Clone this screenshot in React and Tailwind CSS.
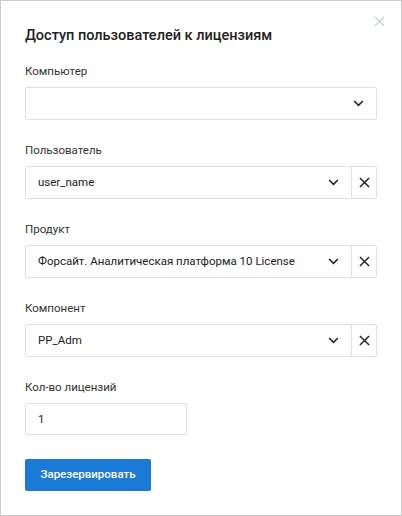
const font = { fontFamily: "Roboto, 'Noto Sans', sans-serif" };

function Chevron() {
  return (
    <svg viewBox="0 0 12 8" className="h-[7px] w-[11px] text-[#222]" fill="none" stroke="currentColor" strokeWidth="1.8">
      <path d="M1 1.2l5 5 5-5" />
    </svg>
  );
}

function Cross({ className }) {
  return (
    <svg viewBox="0 0 12 12" className={className} fill="none" stroke="currentColor" strokeWidth="1.6">
      <path d="M1 1l10 10M11 1L1 11" />
    </svg>
  );
}

function Field({ label, children }) {
  return (
    <div className="flex flex-col">
      <label className="mb-2 text-[11.5px] leading-4 text-[#333]">{label}</label>
      {children}
    </div>
  );
}

function Select({ value, clearable }) {
  return (
    <div className="flex h-[33px] w-[352px] items-stretch rounded-[2px] border border-[#dde1e6] bg-white">
      <div className="flex flex-1 items-center justify-between pl-3 pr-3">
        <span className="text-[11.5px] text-[#222]">{value}</span>
        <Chevron />
      </div>
      {clearable && (
        <button className="flex w-[25px] items-center justify-center border-l border-[#dde1e6] text-[#222]">
          <Cross className="h-[11px] w-[11px]" />
        </button>
      )}
    </div>
  );
}

export default function App() {
  return (
    <div style={font} className="relative h-[516px] w-[402px] border border-[#cbcbcb] bg-white pl-6 pt-[25px]">
      <button className="absolute right-[16px] top-[15px] text-[#c9d5df]">
        <Cross className="h-[11px] w-[11px]" />
      </button>
      <h2 className="text-[14.5px] font-medium leading-5 text-[#222]">Доступ пользователей к лицензиям</h2>
      <div className="mt-[17px] flex flex-col gap-[22px]">
        <Field label="Компьютер">
          <Select value="" />
        </Field>
        <Field label="Пользователь">
          <Select value="user_name" clearable />
        </Field>
        <Field label="Продукт">
          <Select value="Форсайт. Аналитическая платформа 10 License" clearable />
        </Field>
        <Field label="Компонент">
          <Select value="PP_Adm" clearable />
        </Field>
        <Field label="Кол-во лицензий">
          <input
            defaultValue="1"
            className="h-[32px] w-[162px] rounded-[2px] border border-[#dde1e6] px-3 text-[11.5px] text-[#222] outline-none"
          />
        </Field>
      </div>
      <button className="mt-6 h-8 w-[126px] rounded-[2px] bg-[#1b79d8] text-[11.5px] font-medium text-white">
        Зарезервировать
      </button>
    </div>
  );
}
